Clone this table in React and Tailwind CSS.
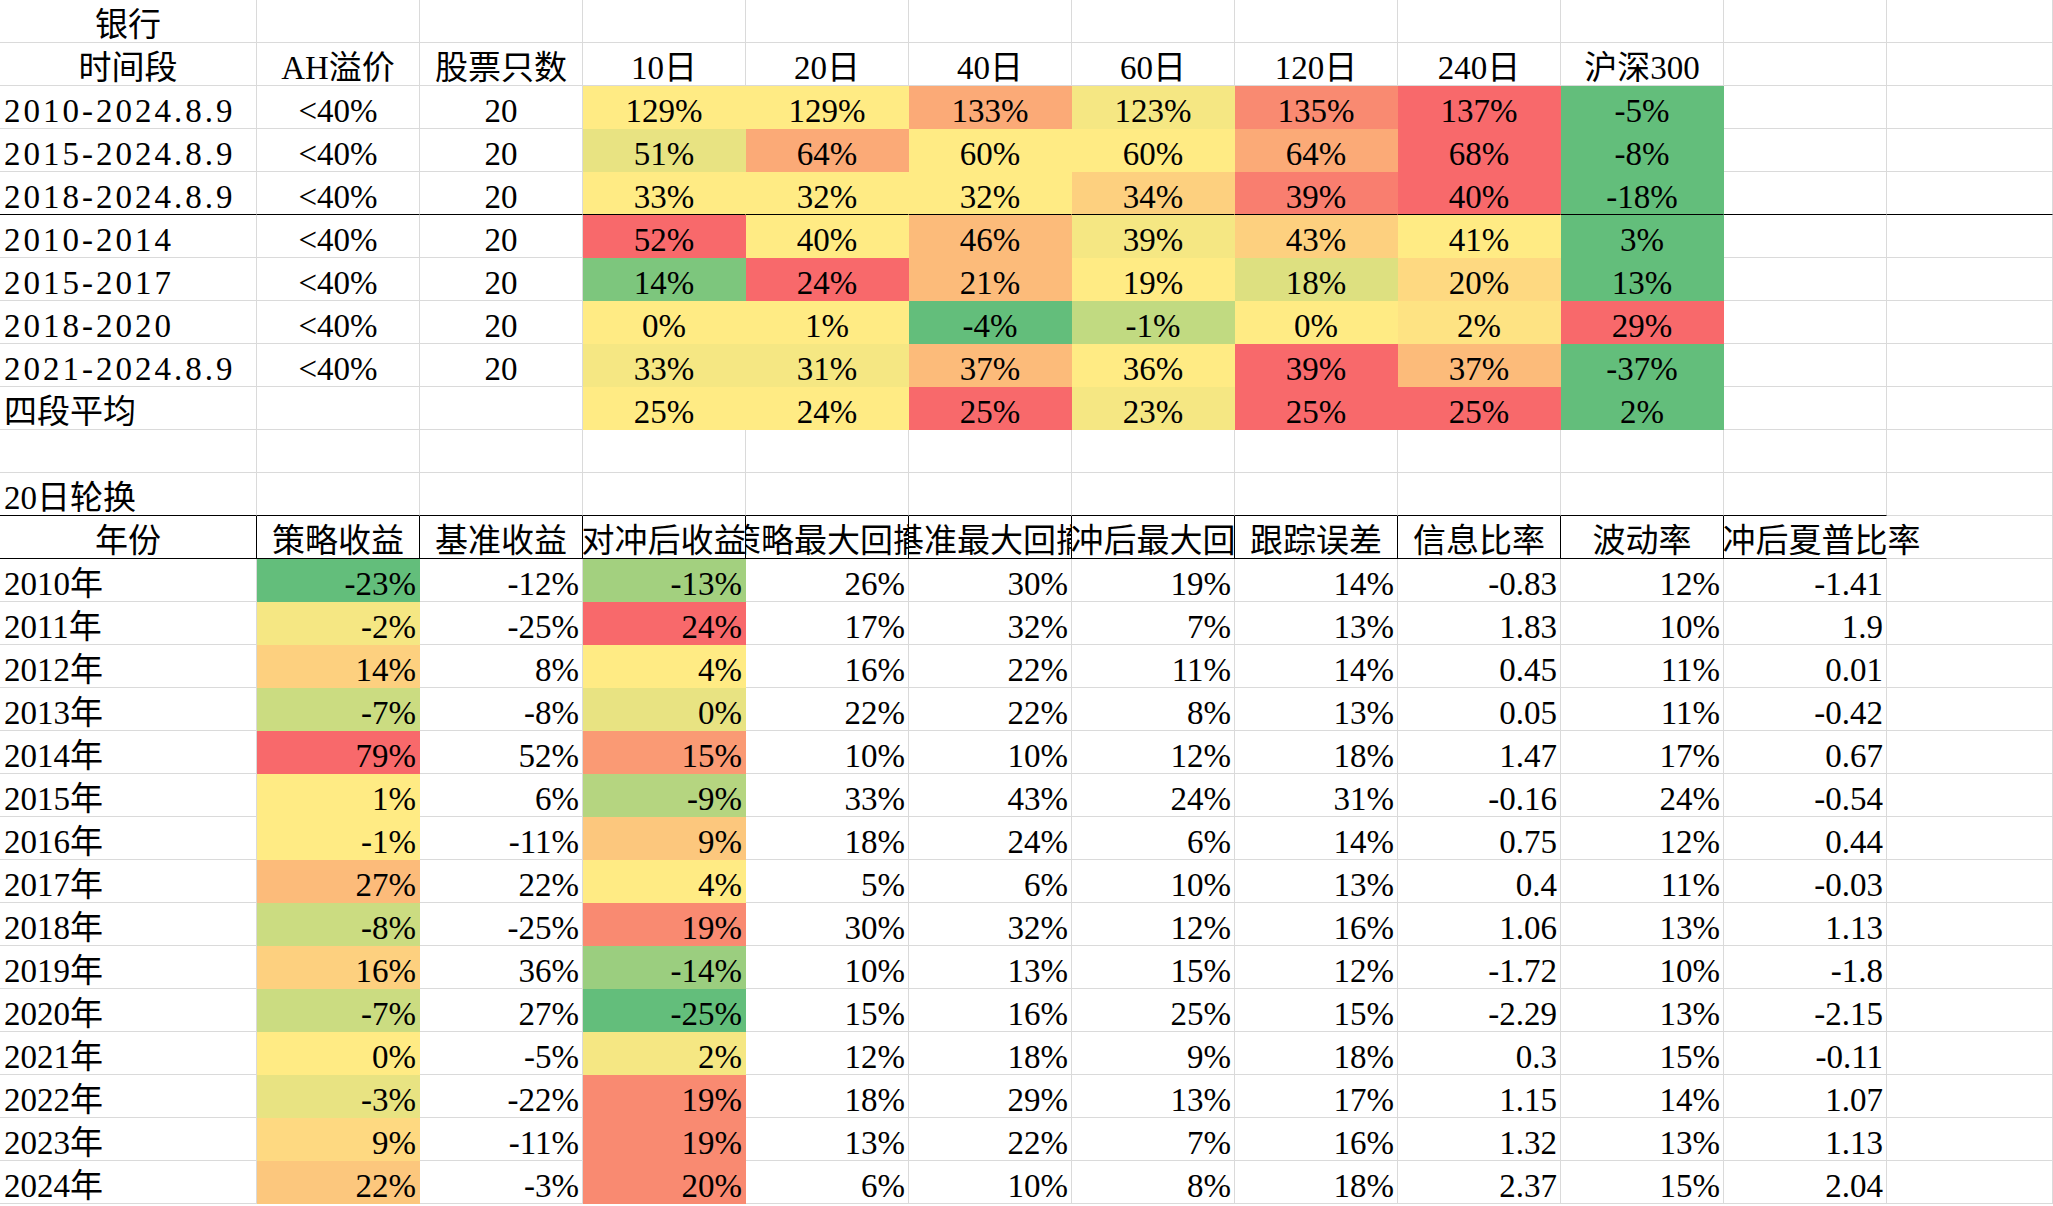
import React from 'react';

// conditional-format fills, one literal class string per shade
const PAL = {
    G: 'bg-[#63be7b]',
    Y: 'bg-[#ffeb84]',
    R: 'bg-[#f8696b]',
    y2: 'bg-[#fee383]',
    yg1: 'bg-[#f5e783]',
    yg2: 'bg-[#e8e382]',
    yg3: 'bg-[#dde080]',
    yg4: 'bg-[#cbdc81]',
    yg5: 'bg-[#c1da81]',
    yg6: 'bg-[#b5d580]',
    yg7: 'bg-[#a3d07f]',
    yg8: 'bg-[#9bce7f]',
    yg9: 'bg-[#7dc67d]',
    o1: 'bg-[#fed981]',
    o2: 'bg-[#fdd07f]',
    o3: 'bg-[#fcc77d]',
    o4: 'bg-[#fcbb7a]',
    o5: 'bg-[#fbaa77]',
    o6: 'bg-[#fa9a74]',
    o7: 'bg-[#f98a71]',
    o8: 'bg-[#f97e6f]',
};

const blank = (extra = {}) => ({ t: '', a: 'c', ...extra });
const L = (t, extra = {}) => ({ t, a: 'l', ...extra });
const C = (t, extra = {}) => ({ t, a: 'c', ...extra });
const Rt = (t, extra = {}) => ({ t, a: 'r', ...extra });

const periods = [
    ['2010-2024.8.9', [['129%', 'Y'], ['129%', 'Y'], ['133%', 'o5'], ['123%', 'yg1'], ['135%', 'o7'], ['137%', 'R'], ['-5%', 'G']]],
    ['2015-2024.8.9', [['51%', 'yg2'], ['64%', 'o5'], ['60%', 'Y'], ['60%', 'Y'], ['64%', 'o5'], ['68%', 'R'], ['-8%', 'G']]],
    ['2018-2024.8.9', [['33%', 'Y'], ['32%', 'Y'], ['32%', 'Y'], ['34%', 'o2'], ['39%', 'o8'], ['40%', 'R'], ['-18%', 'G']]],
    ['2010-2014', [['52%', 'R'], ['40%', 'Y'], ['46%', 'o4'], ['39%', 'yg1'], ['43%', 'o2'], ['41%', 'Y'], ['3%', 'G']]],
    ['2015-2017', [['14%', 'yg9'], ['24%', 'R'], ['21%', 'o4'], ['19%', 'Y'], ['18%', 'yg3'], ['20%', 'o1'], ['13%', 'G']]],
    ['2018-2020', [['0%', 'Y'], ['1%', 'Y'], ['-4%', 'G'], ['-1%', 'yg5'], ['0%', 'Y'], ['2%', 'y2'], ['29%', 'R']]],
    ['2021-2024.8.9', [['33%', 'yg1'], ['31%', 'yg1'], ['37%', 'o4'], ['36%', 'Y'], ['39%', 'R'], ['37%', 'o4'], ['-37%', 'G']]],
];
const average = [['25%', 'Y'], ['24%', 'Y'], ['25%', 'R'], ['23%', 'yg1'], ['25%', 'R'], ['25%', 'R'], ['2%', 'G']];

// 年份, 策略收益, 基准收益, 对冲后收益, 策略最大回撤 ... 对冲后夏普比率
const years = [
    ['2010年', ['-23%', 'G'], '-12%', ['-13%', 'yg7'], '26%', '30%', '19%', '14%', '-0.83', '12%', '-1.41'],
    ['2011年', ['-2%', 'yg1'], '-25%', ['24%', 'R'], '17%', '32%', '7%', '13%', '1.83', '10%', '1.9'],
    ['2012年', ['14%', 'o2'], '8%', ['4%', 'Y'], '16%', '22%', '11%', '14%', '0.45', '11%', '0.01'],
    ['2013年', ['-7%', 'yg4'], '-8%', ['0%', 'yg2'], '22%', '22%', '8%', '13%', '0.05', '11%', '-0.42'],
    ['2014年', ['79%', 'R'], '52%', ['15%', 'o6'], '10%', '10%', '12%', '18%', '1.47', '17%', '0.67'],
    ['2015年', ['1%', 'Y'], '6%', ['-9%', 'yg6'], '33%', '43%', '24%', '31%', '-0.16', '24%', '-0.54'],
    ['2016年', ['-1%', 'Y'], '-11%', ['9%', 'o3'], '18%', '24%', '6%', '14%', '0.75', '12%', '0.44'],
    ['2017年', ['27%', 'o4'], '22%', ['4%', 'Y'], '5%', '6%', '10%', '13%', '0.4', '11%', '-0.03'],
    ['2018年', ['-8%', 'yg4'], '-25%', ['19%', 'o7'], '30%', '32%', '12%', '16%', '1.06', '13%', '1.13'],
    ['2019年', ['16%', 'o2'], '36%', ['-14%', 'yg8'], '10%', '13%', '15%', '12%', '-1.72', '10%', '-1.8'],
    ['2020年', ['-7%', 'yg4'], '27%', ['-25%', 'G'], '15%', '16%', '25%', '15%', '-2.29', '13%', '-2.15'],
    ['2021年', ['0%', 'Y'], '-5%', ['2%', 'yg1'], '12%', '18%', '9%', '18%', '0.3', '15%', '-0.11'],
    ['2022年', ['-3%', 'yg2'], '-22%', ['19%', 'o7'], '18%', '29%', '13%', '17%', '1.15', '14%', '1.07'],
    ['2023年', ['9%', 'o1'], '-11%', ['19%', 'o7'], '13%', '22%', '7%', '16%', '1.32', '13%', '1.13'],
    ['2024年', ['22%', 'o3'], '-3%', ['20%', 'o7'], '6%', '10%', '8%', '18%', '2.37', '15%', '2.04'],
];

const heads2 = ['年份', '策略收益', '基准收益', '对冲后收益', '策略最大回撤', '基准最大回撤', '对冲后最大回撤', '跟踪误差', '信息比率', '波动率', '对冲后夏普比率'];

function buildRows() {
    const rows = [];
    rows.push([C('银行'), ...Array.from({ length: 11 }, () => blank())]);
    rows.push([
        C('时间段'), C('AH溢价'), C('股票只数'), C('10日'), C('20日'), C('40日'), C('60日'),
        C('120日'), C('240日'), C('沪深300'), blank(), blank(),
    ]);
    periods.forEach(([name, vals], i) => {
        const bb = i === 2;
        rows.push([
            L(name, { bb, cls: 'tracking-[3px]' }),
            C('<40%', { bb }),
            C('20', { bb }),
            ...vals.map(([t, bg]) => C(t, { bg, bb })),
            blank({ bb }), blank({ bb }),
        ]);
    });
    rows.push([L('四段平均'), blank(), blank(), ...average.map(([t, bg]) => C(t, { bg })), blank(), blank()]);
    rows.push(Array.from({ length: 12 }, () => blank()));
    rows.push([L('20日轮换', { bb: true }), ...Array.from({ length: 10 }, () => blank({ bb: true })), blank()]);
    rows.push([
        ...heads2.map((t, i) => (i < 10 ? C(t, { bb: true, br: true }) : C(t, { bb: true, nr: true, clip: true }))),
        blank(),
    ]);
    years.forEach(([name, ...vals]) => {
        rows.push([
            L(name),
            ...vals.map((v) => (Array.isArray(v) ? Rt(v[0], { bg: v[1] }) : Rt(v))),
            blank(),
        ]);
    });
    return rows;
}

const Cell = ({ c }) => {
    const align = c.a === 'l' ? 'justify-start pl-[4px]' : c.a === 'r' ? 'justify-end pr-[3px]' : 'justify-center';
    const right = c.br ? 'border-r-black' : c.bg || c.nr ? 'border-r-transparent' : 'border-r-[#dadada]';
    const bottom = c.bb ? 'border-b-black' : c.bg ? 'border-b-transparent' : 'border-b-[#dadada]';
    return (
        <div
            className={`h-[43px] flex items-end whitespace-nowrap border-r border-b ${right} ${bottom} ${align} ${
                c.bg ? PAL[c.bg] : ''
            } ${c.clip ? '[clip-path:inset(0_-400px_0_0)]' : 'overflow-hidden'}`}
        >
            <span className={`shrink-0 leading-[33px] ${c.cls || ''}`}>{c.t}</span>
        </div>
    );
};

const App = () => {
    const rows = buildRows();
    return (
        <div className="w-[2053px] h-[1206px] overflow-hidden bg-white text-black text-[33px] font-['Liberation_Serif','Noto_Sans_CJK_SC',serif]">
            <div className="grid grid-cols-[257px_repeat(10,163px)_1fr]">
                {rows.map((row, r) => row.map((c, i) => <Cell key={`${r}-${i}`} c={c} />))}
            </div>
        </div>
    );
};

export default App;
